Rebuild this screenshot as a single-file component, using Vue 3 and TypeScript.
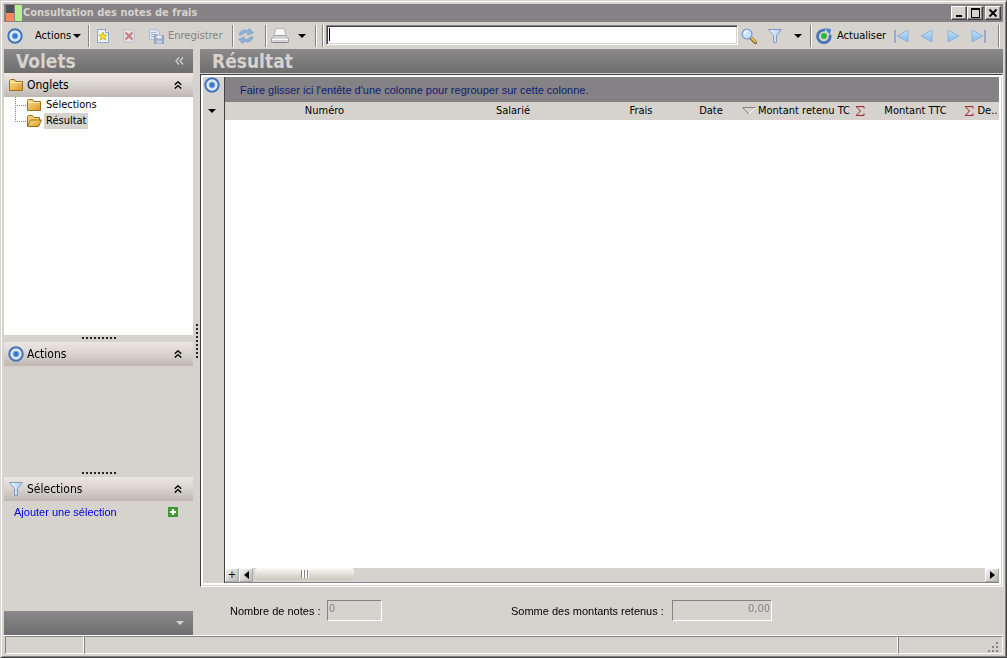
<script setup lang="ts">
import { onMounted, ref } from 'vue'

interface Column {
  label: string
  cls: string
  sum?: boolean
  sorted?: boolean
}

const columns: Column[] = [
  { label: 'Numéro', cls: 'c-num' },
  { label: 'Salarié', cls: 'c-sal' },
  { label: 'Frais', cls: 'c-frais' },
  { label: 'Date', cls: 'c-date', sorted: true },
  { label: 'Montant retenu TC', cls: 'c-ret', sum: true },
  { label: 'Montant TTC', cls: 'c-ttc', sum: true },
  { label: 'De..', cls: 'c-de' },
]

const navigation = [
  { label: 'Premier', shape: 'M15 2v12L4 8z', bar: 'M2 2v13' },
  { label: 'Précédent', shape: 'M13 2v12L2 8z', bar: '' },
  { label: 'Suivant', shape: 'M3 2v12l11-6z', bar: '' },
  { label: 'Dernier', shape: 'M1 2v12l11-6z', bar: 'M14 2v13' },
]

const query = ref('')
const noteCount = ref('0')
const retainedSum = ref('0,00')
const searchBox = ref<HTMLInputElement | null>(null)

onMounted(() => searchBox.value?.focus())
</script>

<template>
  <div class="window">
    <svg class="defs" aria-hidden="true">
      <defs>
        <linearGradient id="folderFill" x1="0" y1="0" x2="1" y2="1">
          <stop offset="0" stop-color="#ffe48c" />
          <stop offset="1" stop-color="#d8962c" />
        </linearGradient>
        <linearGradient id="funnelFill" x1="0" y1="0" x2="1" y2="0">
          <stop offset="0" stop-color="#f4f9ff" />
          <stop offset="1" stop-color="#a9c6f0" />
        </linearGradient>
        <linearGradient id="navFill" x1="0" y1="0" x2="0" y2="1">
          <stop offset="0" stop-color="#c4e0f8" />
          <stop offset="1" stop-color="#7fb8ec" />
        </linearGradient>
        <symbol id="target" viewBox="0 0 16 16">
          <circle cx="8" cy="8" r="6.700" fill="#dfe8f4" stroke="#4273bd" stroke-width="2" />
          <circle cx="8" cy="8" r="3" fill="#3478d0" stroke="#8fb4e4" stroke-width="1" />
        </symbol>
        <symbol id="folder" viewBox="0 0 16 14">
          <path d="M1.500 12.500v-10l1-1h4l1.500 2h6.500v9z" fill="url(#folderFill)" stroke="#a07018" />
          <path d="M2.500 4.500h11" stroke="#fff3c0" />
        </symbol>
        <symbol id="folderOpen" viewBox="0 0 16 14">
          <path d="M1.500 12.500v-10l1-1h4l1.500 2h5.500v3" fill="#f3ce70" stroke="#a07018" />
          <path d="M1.500 12.500l3-6.500h11l-3 6.500z" fill="url(#folderFill)" stroke="#a07018" />
        </symbol>
        <symbol id="funnel" viewBox="0 0 16 16">
          <path d="M1.500 1.500h13l-5 6v7l-3 0v-7z" fill="url(#funnelFill)" stroke="#8299c4" stroke-linejoin="round" />
        </symbol>
        <symbol id="chevrons" viewBox="0 0 8 8">
          <path d="M.8 3.800l3.200-3 3.200 3M.8 7.600l3.200-3 3.200 3" fill="none" stroke="#000" stroke-width="1.400" />
        </symbol>
      </defs>
    </svg>

    <header class="titlebar">
      <svg class="app-icon" viewBox="0 0 16 16">
        <path d="M0 0h8v8H0z" fill="#504e50" />
        <path d="M0 8h8v8H0z" fill="#f58a58" />
        <path d="M9 0h7v16H9z" fill="#b4f08c" />
      </svg>
      <h1>Consultation des notes de frais</h1>
      <button class="win-btn" aria-label="Réduire"><svg viewBox="0 0 12 10"><path d="M3 8h6" stroke="#000" stroke-width="2" /></svg></button>
      <button class="win-btn" aria-label="Agrandir"><svg viewBox="0 0 12 10"><path d="M2.500 1v8.500h8V1" fill="none" stroke="#000" /><path d="M2 1h9" stroke="#000" stroke-width="2" /></svg></button>
      <button class="win-btn close" aria-label="Fermer"><svg viewBox="0 0 12 10"><path d="M2.500 1.500l7 7M9.500 1.500l-7 7" stroke="#000" stroke-width="1.800" /></svg></button>
    </header>

    <div class="toolbar">
      <svg class="ico"><use href="#target" /></svg>
      <button class="tool actions">Actions <i class="caret" /></button>
      <span class="sep" />
      <button class="tool new" aria-label="Nouveau">
        <svg class="ico" viewBox="0 0 16 16">
          <path d="M2.500 1.500h8l3 3v10h-11z" fill="#eef4fc" stroke="#8aa4cc" />
          <path d="M10.500 1.500v3h3" fill="#fff" stroke="#8aa4cc" />
          <path d="M8 4l1.200 3h3l-2.400 2 1 3.200L8 10.300l-2.800 1.900 1-3.200-2.400-2h3z" fill="#ffe12a" stroke="#ccaa18" stroke-width=".8" />
        </svg>
      </button>
      <button class="tool del" aria-label="Supprimer" disabled>
        <svg class="ico" viewBox="0 0 16 16">
          <path d="M2.500 1.500h8l3 3v9.500h-11z" fill="#dfe0e4" stroke="#bcc0ca" />
          <path d="M4.500 4.500l7 7M11.500 4.500l-7 7" stroke="#cc7c80" stroke-width="2.200" />
        </svg>
      </button>
      <button class="tool save" disabled>
        <svg class="ico" viewBox="0 0 16 16">
          <path d="M1.500 1.500h7l3 3v7h-10z" fill="#dde4ee" stroke="#b0bcd2" />
          <path d="M3 4.500h5M3 6.500h7M3 8.500h4" stroke="#9fb2d4" />
          <path d="M6.500 7.500h9v8h-9z" fill="#a0abce" stroke="#929dc2" />
          <path d="M8.500 7.500h5v3h-5z" fill="#e9edf5" />
          <path d="M8.500 12.500h5v3h-5z" fill="#c9d0e2" />
        </svg>
        Enregistrer
      </button>
      <span class="sep" />
      <button class="tool sync" aria-label="Synchroniser">
        <svg class="ico" viewBox="0 0 16 16">
          <path d="M1 7c.5-4 5-6 8.500-4.500L11.500.5 15.500 5l-6 2 .5-2C7.500 4 5 5 4 7z" fill="#8fb0d6" stroke="#7699c4" stroke-width=".6" />
          <path d="M15 9c-.5 4-5 6-8.500 4.500l-2 2L.5 11l6-2-.5 2c2.500 1 5 0 6-2z" fill="#8fb0d6" stroke="#7699c4" stroke-width=".6" />
        </svg>
      </button>
      <span class="sep" />
      <button class="tool print" aria-label="Imprimer">
        <svg viewBox="0 0 20 18">
          <path d="M5.500 1.500h9l1 7h-11z" fill="#fafafa" stroke="#b4b4b4" />
          <path d="M1.500 11.500l3-3h11l3 3v4h-17z" fill="#d2d2d4" stroke="#a2a2a2" />
          <path d="M2 12.500h16" stroke="#fff" />
          <path d="M3 15.500h14" stroke="#858585" />
        </svg>
        <i class="caret" />
      </button>
      <span class="sep" />
      <span class="sep second" />
      <input ref="searchBox" v-model="query" class="search" :class="{ empty: !query }" type="text" aria-label="Rechercher">
      <button class="tool find" aria-label="Chercher">
        <svg class="ico" viewBox="0 0 16 16">
          <path d="M10 10l4.500 4.500" stroke="#7b6430" stroke-width="3.600" stroke-linecap="round" />
          <path d="M10.500 10l4 4" stroke="#f0c050" stroke-width="1.800" stroke-linecap="round" />
          <circle cx="6" cy="6" r="4.900" fill="#c8e2ff" stroke="#7f9cdc" stroke-width="1.300" />
          <path d="M3.500 6a3 3 0 0 1 3-3" fill="none" stroke="#fff" stroke-width="1.400" />
        </svg>
      </button>
      <button class="tool filter" aria-label="Filtrer">
        <svg class="ico"><use href="#funnel" /></svg>
        <i class="caret" />
      </button>
      <span class="sep" />
      <button class="tool refresh">
        <svg class="ico" viewBox="0 0 16 16">
          <path d="M14 7A6.300 6.300 0 1 1 9 2.200" fill="none" stroke="#4676b8" stroke-width="2.800" />
          <path d="M8.500 0l6.500 1-1 6z" fill="#4c88d0" />
          <circle cx="8" cy="8" r="3" fill="#2fb83c" />
        </svg>
        Actualiser
      </button>
      <button v-for="item in navigation" :key="item.label" class="tool nav" :aria-label="item.label">
        <svg class="ico" viewBox="0 0 16 16">
          <path :d="item.shape" fill="url(#navFill)" stroke="#96b0d4" />
          <path v-if="item.bar" :d="item.bar" stroke="#9aa8cc" stroke-width="2" />
        </svg>
      </button>
      <span class="sep last" />
    </div>

    <div class="body">
      <aside class="side">
        <div class="banner">
          <h2>Volets</h2>
          <button class="fold" aria-label="Replier les volets">
            <svg viewBox="0 0 9 8"><path d="M4 .5L1 4l3 3.500M8 .5L5 4l3 3.500" fill="none" stroke="#d6d3ce" stroke-width="1.300" /></svg>
          </button>
        </div>
        <section class="pane tabs-pane">
          <button class="pane-head"><svg class="ico"><use href="#folder" /></svg><span>Onglets</span><svg class="chev"><use href="#chevrons" /></svg></button>
          <ul class="tree">
            <li><svg class="ico"><use href="#folder" /></svg><a href="#selections">Sélections</a></li>
            <li><svg class="ico"><use href="#folderOpen" /></svg><a href="#resultat" class="current">Résultat</a></li>
          </ul>
        </section>
        <div class="grip" />
        <section class="pane actions-pane">
          <button class="pane-head"><svg class="ico"><use href="#target" /></svg><span>Actions</span><svg class="chev"><use href="#chevrons" /></svg></button>
        </section>
        <div class="grip" />
        <section class="pane select-pane">
          <button class="pane-head"><svg class="ico"><use href="#funnel" /></svg><span>Sélections</span><svg class="chev"><use href="#chevrons" /></svg></button>
          <div class="add-row">
            <a href="#ajouter">Ajouter une sélection</a>
            <button aria-label="Ajouter">
              <svg viewBox="0 0 10 10"><path d="M0 0h10v10H0z" fill="#3f9a34" /><path d="M5 2v6M2 5h6" stroke="#fff" stroke-width="2" /></svg>
            </button>
          </div>
        </section>
        <div class="banner side-foot"><i class="caret light" /></div>
      </aside>

      <div class="splitter"><div class="vgrip" /></div>

      <main class="main">
        <div class="banner"><h2>Résultat</h2></div>
        <div class="frame">
          <div class="gutter">
            <svg class="ico"><use href="#target" /></svg>
            <i class="caret" />
          </div>
          <div class="sheet">
            <p class="group-band">Faire glisser ici l'entête d'une colonne pour regrouper sur cette colonne.</p>
            <table>
              <thead>
                <tr>
                  <th v-for="col in columns" :key="col.label" :class="col.cls" scope="col">
                    <div class="cell">
                      <span class="lbl">{{ col.label }}</span>
                      <svg v-if="col.sorted" class="sort" viewBox="0 0 14 8"><path d="M.5 .5h13l-6.500 6z" fill="#d6d3ce" /><path d="M13.500 .5L7 7" stroke="#fff" /><path d="M13.500 .5H.5L7 7" fill="none" stroke="#858285" /></svg>
                      <svg v-if="col.sum" class="sigma" viewBox="0 0 10 10"><path d="M9 2.500V.6H1.200L5.500 5 1.200 9.400H9V7.500" fill="none" stroke="#9c1c22" /></svg>
                    </div>
                  </th>
                </tr>
              </thead>
            </table>
            <div class="rows" />
            <div class="hscroll">
              <button class="sb plus" aria-label="Ajouter une ligne">+</button>
              <button class="sb" aria-label="Défiler à gauche"><svg viewBox="0 0 5 8"><path d="M5 0v8L0 4z" /></svg></button>
              <div class="thumb"><i /></div>
              <button class="sb right" aria-label="Défiler à droite"><svg viewBox="0 0 5 8"><path d="M0 0v8l5-4z" /></svg></button>
            </div>
          </div>
        </div>
        <form class="totals" @submit.prevent>
          <label for="count">Nombre de notes :</label>
          <input id="count" v-model="noteCount" class="count" type="text" disabled>
          <label for="sum" class="sum-label">Somme des montants retenus :</label>
          <input id="sum" v-model="retainedSum" class="sum" type="text" disabled>
        </form>
      </main>
    </div>

    <footer class="status">
      <div class="s-first" />
      <div class="s-mid" />
      <div class="s-last">
        <svg viewBox="0 0 11 11"><path d="M8 0h2v2H8zM4 4h2v2H4zM8 4h2v2H8zM0 8h2v2H0zM4 8h2v2H4zM8 8h2v2H8z" fill="#858285" /></svg>
      </div>
    </footer>
  </div>
</template>

<style>
body {
  margin: 0;
}
</style>

<style scoped>
* {
  box-sizing: border-box;
}

.window {
  display: flex;
  flex-direction: column;
  min-height: 100vh;
  padding: 3px;
  border: 1px solid #d6d3ce;
  border-right-color: #424142;
  border-bottom-color: #424142;
  box-shadow: inset 1px 1px #fff, inset -1px -1px #848284;
  background: #d6d3ce;
  color: #000;
  font-family: "DejaVu Sans Condensed", "DejaVu Sans", sans-serif;
  font-size: 11px;
  line-height: 14px;
}

.defs {
  position: absolute;
  width: 0;
  height: 0;
}

h1,
h2,
p,
ul {
  margin: 0;
  padding: 0;
}

button,
input {
  margin: 0;
  padding: 0;
  border: 0;
  background: none;
  color: inherit;
  font: inherit;
}

a {
  color: inherit;
  text-decoration: none;
}

.ico {
  display: block;
  flex: none;
  width: 16px;
  height: 16px;
}

.caret {
  flex: none;
  width: 0;
  height: 0;
  border: 4px solid transparent;
  border-top-color: #000;
  border-bottom: 0;
}

.caret.light {
  border-top-color: #d6d3ce;
}

.titlebar {
  display: flex;
  flex: none;
  align-items: center;
  height: 18px;
  padding: 0 2px;
  background: #848284;
  color: #d6d3ce;
}

.app-icon {
  width: 16px;
  height: 16px;
  margin-right: 1px;
}

h1 {
  flex: 1;
  font-size: 11px;
  line-height: 16px;
}

.win-btn {
  display: grid;
  place-items: center;
  width: 16px;
  height: 14px;
  background: #d6d3ce;
  border: 1px solid;
  border-color: #fff #424142 #424142 #fff;
  box-shadow: inset -1px -1px #848284;
}

.win-btn svg {
  width: 12px;
  height: 10px;
}

.close {
  margin-left: 2px;
}

.toolbar {
  display: flex;
  flex: none;
  align-items: center;
  height: 27px;
  padding: 0 3px;
}

.tool {
  display: flex;
  flex: none;
  align-items: center;
  white-space: nowrap;
}

.sep {
  flex: none;
  width: 2px;
  height: 22px;
  border-left: 1px solid #848284;
  border-right: 1px solid #fff;
}

.actions {
  width: 65px;
  padding-left: 12px;
  gap: 2px;
}

.new {
  width: 28px;
  padding-left: 5px;
}

.del {
  width: 26px;
  padding-left: 3px;
}

.save {
  width: 88px;
  padding-left: 4px;
  gap: 4px;
  color: #848284;
}

.sync {
  width: 31px;
  padding-left: 4px;
}

.print {
  width: 48px;
  padding-left: 3px;
  gap: 8px;
}

.print svg {
  width: 20px;
  height: 18px;
}

.second {
  margin-left: 5px;
}

.search {
  flex: 1;
  min-width: 60px;
  height: 20px;
  margin: 0 3px 2px 2px;
  padding: 0 2px;
  border: 1px solid;
  border-color: #848284 #fff #fff #848284;
  box-shadow: inset 1px 1px #424142, inset -1px -1px #d6d3ce;
  background: #fff;
  outline: 0;
}

.search.empty:focus {
  background: #fff linear-gradient(#000, #000) 2px 2px / 1px 13px no-repeat;
  caret-color: transparent;
}

.find {
  width: 26px;
}

.filter {
  width: 43px;
  gap: 11px;
}

.refresh {
  width: 76px;
  padding-left: 4px;
  gap: 5px;
}

.nav {
  width: 26px;
  padding-left: 5px;
}

.last {
  margin-left: 6px;
}

.body {
  display: flex;
  flex: 1;
}

.side {
  display: flex;
  flex: none;
  flex-direction: column;
  width: 189px;
}

.banner {
  display: flex;
  flex: none;
  align-items: center;
  justify-content: space-between;
  height: 24px;
  padding: 0 9px 0 12px;
  background: linear-gradient(#8b898b, #6e6e6e);
  color: #d6d3ce;
}

h2 {
  font-size: 19px;
  line-height: 24px;
}

.fold svg {
  display: block;
  width: 9px;
  height: 8px;
}

.pane {
  display: flex;
  flex-direction: column;
}

.pane-head {
  display: flex;
  flex: none;
  align-items: center;
  height: 24px;
  padding: 0 11px 0 4px;
  gap: 3px;
  background: linear-gradient(#ede7e2, #d8d3ce 50%, #bdb8b2);
  font-size: 12px;
  text-align: left;
}

.pane-head span {
  flex: 1;
}

.chev {
  width: 8px;
  height: 8px;
}

.tree {
  flex: 1;
  padding-left: 11px;
  background: #fff;
  list-style: none;
}

.tabs-pane {
  flex: 262;
}

.actions-pane {
  flex: 128;
}

.select-pane {
  flex: 134;
}

.tree li {
  display: flex;
  align-items: center;
  height: 16px;
}

.tree li::before {
  content: "";
  width: 11px;
  height: 16px;
  background: linear-gradient(90deg, #848284 50%, transparent 50%) 0 8px / 2px 1px repeat-x, linear-gradient(#848284 50%, transparent 50%) 0 0 / 1px 2px repeat-y;
}

.tree li:last-child::before {
  background: linear-gradient(90deg, #848284 50%, transparent 50%) 0 8px / 2px 1px repeat-x, linear-gradient(#fff, #fff) 0 100% / 1px 8px no-repeat, linear-gradient(#848284 50%, transparent 50%) 0 0 / 1px 2px repeat-y;
}

.tree a {
  height: 16px;
  margin-left: 2px;
  padding: 0 2px;
  line-height: 16px;
}

.tree a.current {
  background: #d6d3ce;
}

.grip {
  flex: none;
  height: 7px;
  padding: 2px 77px 3px 78px;
  background: linear-gradient(90deg, #222 50%, transparent 50%) 0 0 / 4px 2px repeat-x;
  background-clip: content-box;
  background-origin: content-box;
}

.add-row {
  display: flex;
  align-items: center;
  justify-content: space-between;
  padding: 4px 15px 0 10px;
  color: #0000d8;
  font-family: "Liberation Sans", Arial, sans-serif;
}

.add-row svg {
  display: block;
  width: 10px;
  height: 10px;
}

.side-foot {
  justify-content: flex-end;
}

.splitter {
  display: flex;
  flex: none;
  width: 7px;
}

.vgrip {
  align-self: center;
  width: 2px;
  height: 36px;
  margin-left: 3px;
  background: linear-gradient(#222 50%, transparent 50%) 0 0 / 2px 4px repeat-y;
}

.main {
  display: flex;
  flex: 1;
  flex-direction: column;
  min-width: 0;
}

.frame {
  display: flex;
  flex: 1;
  min-height: 200px;
  margin-top: 1px;
  padding: 2px 3px 3px 2px;
  border: 1px solid;
  border-color: #424142 #fff #fff #424142;
  box-shadow: inset 2px 2px #fff, inset -1px -1px #d6d3ce, inset -3px -3px #fff;
  background: #d6d3ce;
}

.gutter {
  display: flex;
  flex: none;
  flex-direction: column;
  align-items: center;
  width: 22px;
  padding-right: 3px;
  gap: 16px;
  border-right: 1px solid #424142;
}

.sheet {
  display: flex;
  flex: 1;
  flex-direction: column;
  min-width: 0;
  border-bottom: 1px solid #848284;
  background: #fff;
}

.group-band {
  height: 25px;
  padding-left: 15px;
  background: #848284;
  color: #102070;
  font-family: "Liberation Sans", Arial, sans-serif;
  line-height: 26px;
}

table {
  width: 100%;
  table-layout: fixed;
  border-collapse: collapse;
  background: #d6d3ce;
}

th {
  height: 18px;
  padding: 0;
  font-weight: 400;
}

.cell {
  display: flex;
  align-items: center;
  white-space: nowrap;
}

.lbl {
  flex: 1;
}

.c-sal {
  width: 178px;
}

.c-frais {
  width: 78px;
}

.c-date {
  width: 78px;
}

.c-ret {
  width: 109px;
}

.c-ttc {
  width: 109px;
}

.c-de {
  width: 23px;
}

.sort {
  width: 14px;
  height: 8px;
  margin-right: 2px;
}

.sigma {
  width: 10px;
  height: 10px;
  margin: 0 2px 1px 0;
}

.c-ret .lbl {
  text-align: left;
}

.rows {
  flex: 1;
}

.hscroll {
  display: flex;
  flex: none;
  height: 14px;
  background: #d6d3ce;
}

.sb {
  display: grid;
  place-items: center;
  width: 14px;
  height: 14px;
  border: 1px solid;
  border-color: #fff #aaa #aaa #fff;
  background: linear-gradient(135deg, #f4f3f0, #bbb8b2);
}

.sb svg {
  width: 5px;
  height: 8px;
}

.plus {
  line-height: 12px;
}

.thumb {
  display: grid;
  place-items: center;
  width: 99px;
  height: 12px;
  margin-left: 2px;
  border-radius: 3px;
  background: linear-gradient(#fbfaf7, #c9c6bc);
}

.thumb i {
  width: 8px;
  height: 8px;
  background: linear-gradient(90deg, #848284 33%, #fff 33%) 0 0 / 3px 8px;
}

.right {
  margin-left: auto;
}

.totals {
  display: flex;
  flex: none;
  align-items: center;
  height: 48px;
  padding: 0 0 2px 30px;
  font-family: "Liberation Sans", Arial, sans-serif;
}

.totals input {
  height: 21px;
  padding: 0 1px 3px;
  border: 1px solid;
  border-color: #848284 #fff #fff #848284;
  color: #848284;
  font-family: "DejaVu Sans Condensed", "DejaVu Sans", sans-serif;
}

.totals label {
  width: 97px;
  padding-top: 2px;
}

.count {
  width: 55px;
}

.totals .sum-label {
  width: 161px;
  margin-left: 129px;
}

.sum {
  width: 100px;
  text-align: right;
}

.status {
  display: flex;
  flex: none;
  height: 19px;
  padding-left: 1px;
  border-top: 1px solid #fff;
}

.status div {
  height: 18px;
  border: 1px solid;
  border-color: #848284 #fff #fff #848284;
}

.s-first {
  width: 79px;
}

.s-mid {
  flex: 1;
}

.s-last {
  display: flex;
  align-items: flex-end;
  justify-content: flex-end;
  width: 105px;
  padding-right: 3px;
}

.s-last svg {
  width: 11px;
  height: 11px;
}
</style>
